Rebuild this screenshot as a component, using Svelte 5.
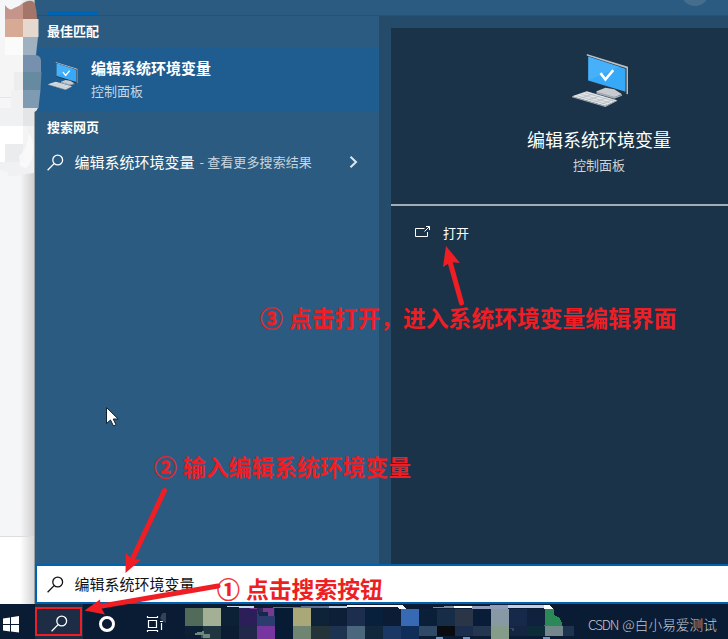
<script>
  const topCells = ['#526a5a', '#a3b096', '#0c2036', '#2c1f59', '#2a3d6c', '#081b34', '#aaa878', '#0f2338', '#0c1f36', '#1c2d4e', '#08203c', '#0c1c35', '#3869b4', '#0a1f38', '#162c47', '#2a3548', '#0a1d38', '#8799a5', '#16294a', '#10213e', '#2a8957'];
  const bottomCells = ['#0c2036', '#1f3540', '#0b1c33', '#222849', '#77359f', '#081b34', '#708571', '#253438', '#1e3350', '#4a677d', '#10273c', '#1a3863', '#102c58', '#2f4a66', '#0a0c10', '#1b2e4e', '#253650', '#869c8b', '#132540', '#0c2c38', '#74878c', '#1e3350'];
</script>

{#snippet magnifier(size)}
  <svg class="magnifier" width={size} height={size} viewBox="0 0 17 17" fill="none" stroke="currentColor" stroke-width="1.3">
    <circle cx="10.7" cy="6" r="4.9" /><path d="M7.1 9.6 .6 16.2" />
  </svg>
{/snippet}

{#snippet computer(w, h)}
  <svg width={w} height={h} viewBox="0 0 58 54">
    <path d="M16 0 57 13v28l-2 .5L16 28Z" fill="#26343f" />
    <path d="M15 0 57 13v28l-1.5-.2V14.5L15 1.5Z" fill="#b9c2c8" />
    <path d="M16.5 2.5 54.5 15v23.5L16.5 27Z" fill="#36a9f8" />
    <path d="M16.5 2.5 49 13 16.500 27Z" fill="#57b8fb" opacity=".5" />
    <path d="m29 19.500 5 6.500 8-9.500" fill="none" stroke="#fff" stroke-width="2.6" />
    <path d="m25 38 9-3.500 9 1.500 8 5-8 3-18-5Z" fill="#c5cbd0" />
    <path d="m25 38.500 18 5 8-2v1l-8 3-18-5Z" fill="#a3abb1" />
    <path d="m0 43 15-5 31 9-12 6Z" fill="#e3e6e9" />
    <path d="m0 43 34 10 12-6v1l-12 6L0 44Z" fill="#a9b0b6" />
    <path d="m5 42.500 31 9M9 41l30 9M13 39.500l30 8.500M9 45l13-4.500M16 47l13-4.500M23 49l13-4.500M30 51l12-4.500" stroke="#b4bac0" stroke-width=".8" />
  </svg>
{/snippet}

<div class="screen">
  <div class="upper">
    <aside>
      <div class="page"></div>
      <div class="foot"></div>
    </aside>
    <main>
      <div class="tabs"><i></i><b></b></div>
      <div class="body">
        <section class="results">
          <h2>最佳匹配</h2>
          <div class="best">
            {@render computer(30, 28)}
            <div><strong>编辑系统环境变量</strong><p>控制面板</p></div>
          </div>
          <h2 class="web">搜索网页</h2>
          <div class="suggest">
            {@render magnifier(17)}
            <span class="term">编辑系统环境变量</span><span class="more">- 查看更多搜索结果</span>
            <svg class="chev" width="9" height="12" viewBox="0 0 9 12" fill="none" stroke="#dce7ee" stroke-width="2"><path d="m1.500.8 5.500 5.200-5.500 5.200" /></svg>
          </div>
        </section>
        <section class="preview">
          <div class="hero">
            {@render computer(57, 53)}
            <h1>编辑系统环境变量</h1>
            <p>控制面板</p>
          </div>
          <div class="open">
            <svg width="16" height="13" viewBox="0 0 16 13" fill="none" stroke="#fff" stroke-width="1"><path d="M9.500 2.500h-9v8h12V6M9.500 5.500l5-5M11 .5h3.500V4" /></svg>
            <span>打开</span>
          </div>
        </section>
      </div>
      <div class="search">{@render magnifier(17)}<span>编辑系统环境变量</span></div>
    </main>
  </div>
  <footer>
    <div class="start"><svg width="17" height="17" viewBox="0 0 17 17" fill="#fff"><path d="M0 2.500 7 1.500V8H0ZM8 1.300 16 0v8H8ZM0 9h7v6.500L0 14.500ZM8 9h8v7.500l-8-1.100Z" /></svg></div>
    <div class="find">{@render magnifier(17)}</div>
    <div class="cortana"><i></i></div>
    <div class="tasks"><svg width="22" height="22" viewBox="0 0 22 22" fill="none" stroke="#fff" stroke-width="1.2"><path d="M1 4.500h11M1 17.500h11M2.500 7.500h8v7h-8ZM1.500 5V3M11.500 5V3M1.500 17v2M11.500 17v2M15.500 10v7M14 8.500h3M15.500 4v2" /><path d="M20-2v12c-4-1-6-4-5-7 1-3 3-4 5-5Z" fill="#354356" stroke="none" /></svg></div>
    <div class="mosaic">
      <svg width="400" height="35" viewBox="0 0 400 35" shape-rendering="crispEdges">
        {#each topCells as color, i}<rect x={i * 18} y={i > 11 ? 5 : 4} width={i === 20 ? 9 : 18} height="18" fill={color} />{/each}
        {#each bottomCells as color, i}<rect x={i * 18} y="22" width={i === 21 ? 11 : 18} height={i > 12 && i !== 17 ? 10 : 13} fill={color} />{/each}
        <path d="M368 11q9 1 9 11h-18Z" fill="#2a8957" />
        <path d="M63 4h26v8h-6V8h-9V5h-8Z" fill="#743b91" />
        <path d="M72 4h6v4h5v4h6V4h3v8h-18Z" fill="#081b34" opacity=".6" />
        <path d="m10 29 9-2v3h6v4h-9v-3h-6Z" fill="#70877e" />
        <path d="M0 31h18v4H0Z" fill="#0a1b34" opacity=".5" />
        <path d="M42 2h13v1H42ZM54 2h15v2H54Z" fill="#c5daeb" />
        <path d="M88 3l56-1v2H88Z" fill="#5b7390" />
        <path d="M144 2h18v2h-18Z" fill="#b9c8de" />
        <path d="M162 1h55l5 4h-7l-3-2h-50Z" fill="#f5f7ff" />
        <path d="M248 3l22-1v2h-22Z" fill="#7f8ba0" />
        <path d="M269 2h18v2h-18Z" fill="#fff" />
        <path d="m287 2 36-1v4h-36Z" fill="#8f9db8" />
        <path d="M323 1h36v3h-36Z" fill="#c7cde4" />
        <path d="M359 1h5q4 2 4 4h-9Z" fill="#fff" />
        <path d="M251 33h7v2h-7ZM278 33h7v2h-7ZM358 33h7v2h-7Z" fill="#7195bd" />
        <path d="M325 24h4v3h-2v-2h-3Z" fill="#34485f" />
      </svg>
    </div>
    <span class="credit"><em>CSDN</em> @白小易爱测试</span>
  </footer>

  <svg class="smudge" width="42" height="185" viewBox="0 0 42 185">
    <path d="M0 108h34v65l-8 1-5 1-2 1H9l-2-4-7-2Z" fill="#f0f1f2" />
    <path d="M0 37h23v60H0Z" fill="#f5f5f5" />
    <path d="M0 97h14v1H0Z" fill="#e4e5e6" />
    <path d="M5 5q5 7 9 3 6-2 9-5v16H5Z" fill="#c5948a" />
    <path d="M23 3q9-5 12 1 2 7 2 15H23Z" fill="#a4766a" />
    <path d="M5 19h18v18H5Z" fill="#d7aa96" /><path d="M23 19h15.500v18H23Z" fill="#e5d8ce" />
    <path d="M5 37h18v18H5Z" fill="#fbfbfb" /><path d="M23 37h15l-2 18H23Z" fill="#a0b2bf" />
    <path d="M23 55h13q5 1 5 6v11H23Z" fill="#7690ae" />
    <path d="M14 72h9v18h-9Z" fill="#ededed" /><path d="M23 72h18.500l-1 18H23Z" fill="#668ba1" />
    <path d="M11 90h12v18H11Z" fill="#f1f1f1" /><path d="M23 90h17.500l-2 18H23Z" fill="#7e9bb2" />
    <path d="M23 108h15q-1 3-4 4v14H23Z" fill="#e3e5e7" />
    <path d="M0 126h23v18H0Z" fill="#fff" /><path d="M23 126h5v18h-5Z" fill="#f4f4f4" />
    <path d="M0 144h5v18H0Z" fill="#fff" /><path d="M5 144h18v18H5Z" fill="#ebecee" />
    <path d="M29 133q4 5 4 17t-7 18l-6-2-1-10q8-6 10-23Z" fill="#fff" opacity=".6" />
  </svg>
  <svg class="arrows" width="728" height="639" viewBox="0 0 728 639">
    <g stroke="#ef1e24" stroke-width="5" stroke-linecap="round"><path d="m461.500 303-12-43M164.500 490.500 132 560M218 586 99 606.500" /></g>
    <g fill="#ef1e24"><path d="m446 246 14 17-9-1-8 5ZM125.500 573l.3-20 6 6 9 .8ZM84.500 610.500l15.500-11 1 8 4 7Z" /></g>
    <rect x="36" y="608" width="45" height="27" fill="none" stroke="#ef1e24" stroke-width="2" />
    <path d="M106.500 407.500v16l4-3.500 3 6 2.500-1.300-2.800-5.700h5Z" fill="#fff" stroke="#142331" stroke-width="1" />
  </svg>
  <div class="note one"><i>①</i>点击搜索按钮</div>
  <div class="note two"><i>②</i>输入编辑系统环境变量</div>
  <div class="note three"><i>③</i>点击打开，进入系统环境变量编辑界面</div>
</div>

<style>
  :global(body) { margin: 0; overflow: hidden; }
  h1, h2, p { margin: 0; font-weight: 400; }
  svg { display: block; flex: none; }
  .screen { position: relative; width: 728px; height: 639px; overflow: hidden; display: flex; flex-direction: column; font-family: "Noto Sans CJK SC", sans-serif; color: #fff; }
  .upper { height: 604px; display: flex; }
  aside { width: 34px; border-right: 1px solid #9ba2a6; display: flex; flex-direction: column; background: linear-gradient(90deg, transparent 20px, #d0d0d0 34px), #f5f6f8; }
  .page { height: 536px; border-bottom: 1px solid #ddd; }
  .foot { flex: 1; background: linear-gradient(90deg, #fff 20px, #d5d5d5 34px); }
  main { width: 693px; display: flex; flex-direction: column; background: #2b5b80; }
  .tabs { height: 16px; box-sizing: border-box; border-bottom: 1px solid #265273; display: flex; align-items: flex-end; overflow: hidden; justify-content: space-between; }
  .tabs i { width: 50px; height: 4px; margin-left: 13px; background: #0063b1; }
  .tabs b { width: 28px; height: 28px; border-radius: 50%; background: #456d8d; margin: 0 19px 9px 0; }
  .body { height: 548px; display: flex; }
  .results { width: 344px; }
  h2 { font-size: 13px; line-height: 18px; font-weight: 700; padding: 6px 0 8px 12px; }
  .best { height: 64px; background: #1f5c8f; display: flex; padding-left: 13px; box-sizing: border-box; align-items: flex-start; }
  .best svg { margin-top: 14px; }
  .best div { margin: 9px 0 0 13px; }
  .best strong { display: block; font-size: 15px; line-height: 22px; }
  .best p { font-size: 13px; line-height: 20px; margin-top: 2px; color: #c4d8e7; }
  .suggest { display: flex; align-items: center; padding-left: 12px; height: 36px; font-size: 15px; }
  .term { margin: -2px 0 0 10.500px; }
  .more { font-size: 13px; color: #c6d5df; margin: -1px 0 0 5px; letter-spacing: .1px; }
  .chev { margin: 0 21px 0 auto; }
  .preview { width: 337px; border-left: 12px solid #244b69; border-top: 12px solid #244b69; background: #1a3349; }
  .hero { height: 176px; border-bottom: 2px solid #a3adb6; display: flex; flex-direction: column; align-items: center; padding-left: 79px; }
  .hero svg { margin: 26px -3px 0 0; }
  h1 { font-size: 18px; line-height: 26px; margin-top: 19px; }
  .hero p { font-size: 13px; line-height: 20px; margin-top: 3px; color: #ced4d9; }
  .open { display: flex; align-items: center; padding: 17px 0 0 24px; font-size: 13px; line-height: 20px; }
  .open svg { margin-top: -2px; }
  .open span { margin-left: 12px; }
  .search { height: 40px; box-sizing: border-box; border: 2px solid #0063b1; border-right: 0; background: #fff; color: #111; display: flex; align-items: center; padding-left: 10px; font-size: 15px; }
  .search span { margin: -2px 0 0 10.500px; }
  footer { height: 35px; background: #0a1b34; display: flex; align-items: center; }
  .start { width: 32px; padding: 5px 0 0 3px; }
  .find { width: 48px; height: 35px; background: #1c2d45; display: flex; align-items: center; justify-content: center; padding-top: 4px; box-sizing: border-box; }
  .cortana { width: 48px; display: flex; justify-content: center; padding-top: 5px; box-sizing: border-box; }
  .cortana i { width: 10px; height: 10px; border: 3px solid #fff; border-radius: 50%; }
  .tasks { width: 39px; margin-left: 15px; padding-top: 4px; }
  .mosaic { width: 403px; align-self: flex-start; }
  .credit { font-size: 13.700px; line-height: 20px; color: #c1c7cf; white-space: nowrap; font-weight: 300; padding-top: 4px; }
  .credit em { font-style: normal; letter-spacing: -1.2px; margin-right: 1px; }
  .smudge, .arrows, .note { position: absolute; top: 0; left: 0; }
  .note { color: #ef1e24; font-size: 22.800px; line-height: 30px; font-weight: 700; white-space: nowrap; display: flex; }
  .note i { font-style: normal; width: 29px; -webkit-text-stroke: .4px #ef1e24; }
  .one { left: 217px; top: 574px; }
  .two { left: 154px; top: 452px; }
  .three { left: 260px; top: 303px; }
</style>
